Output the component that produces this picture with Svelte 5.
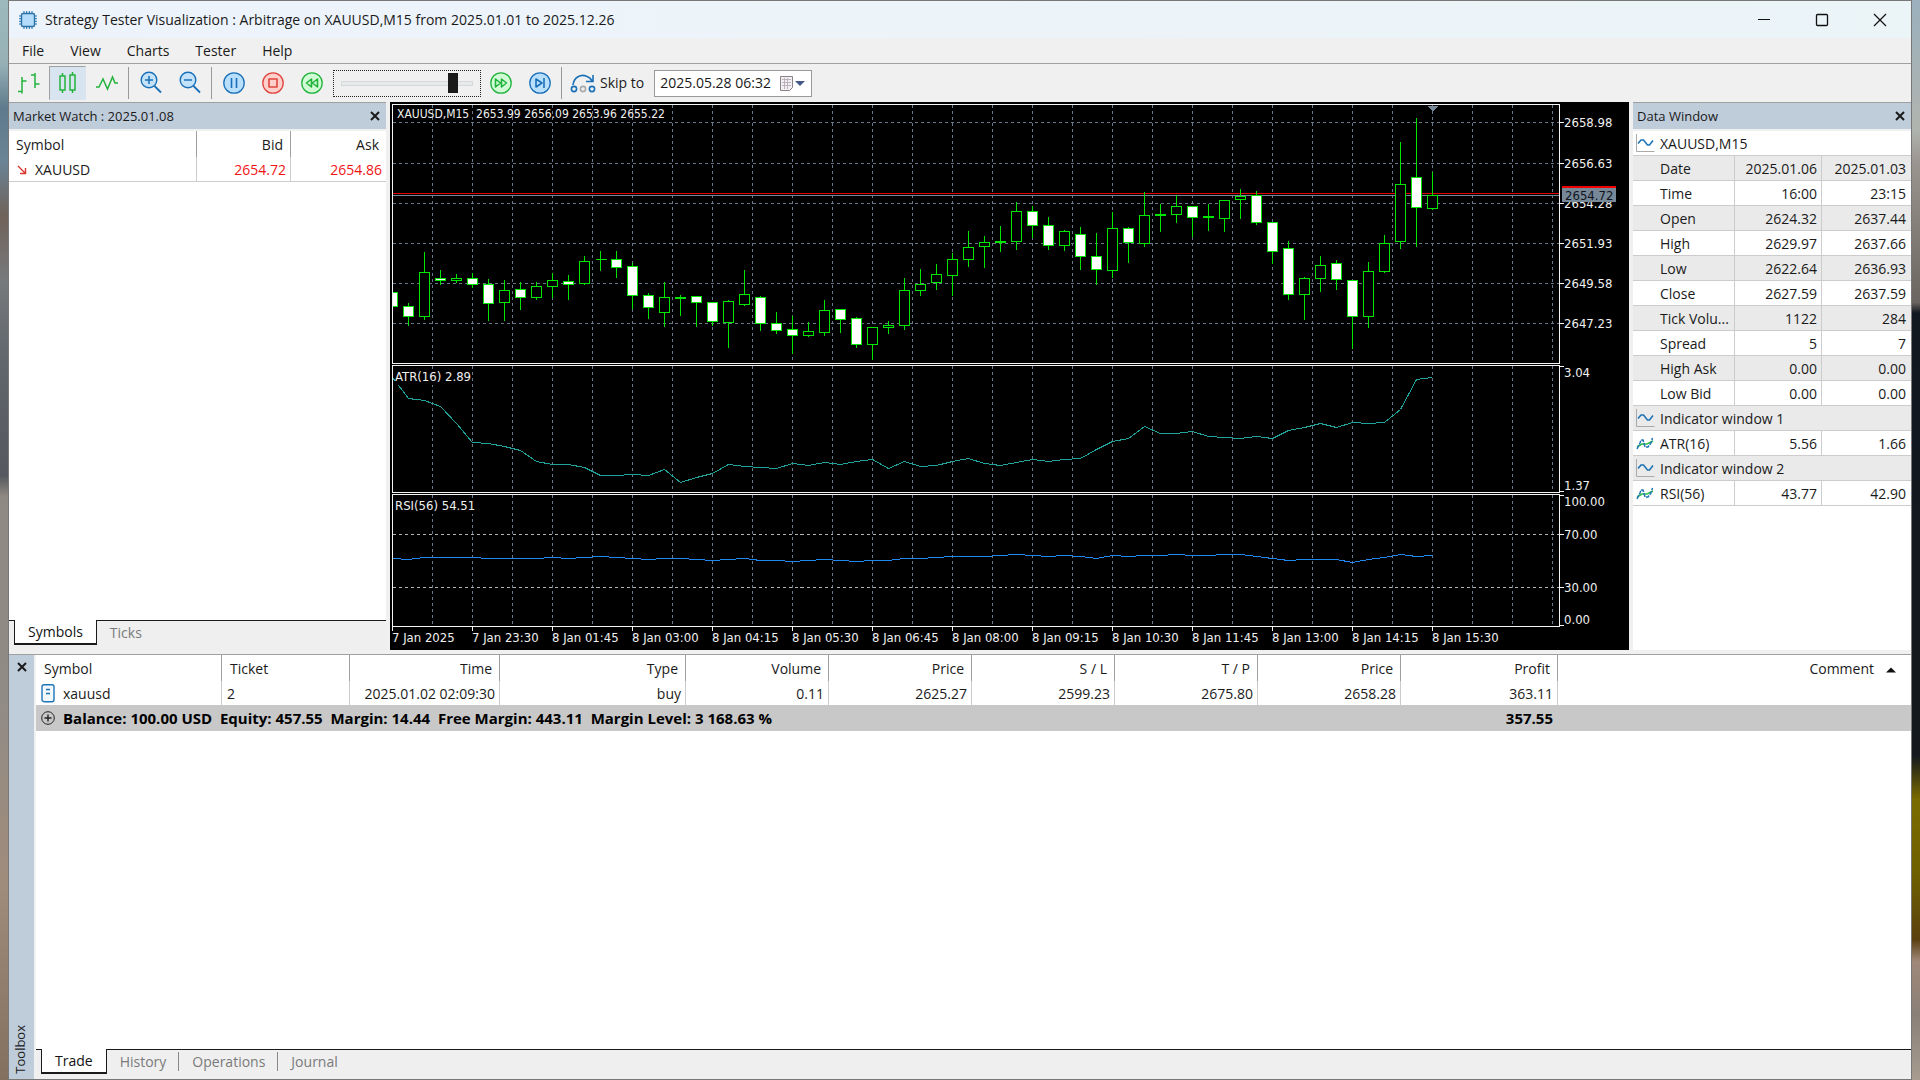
<script>
  const menus = ['File', 'View', 'Charts', 'Tester', 'Help'];

  const tradeHead = ['Symbol', 'Ticket', 'Time', 'Type', 'Volume', 'Price', 'S / L', 'T / P', 'Price', 'Profit'];
  const tradeRow = ['2', '2025.01.02 02:09:30', 'buy', '0.11', '2625.27', '2599.23', '2675.80', '2658.28', '363.11'];

  const dataRows = [
    { kind: 'window', name: 'XAUUSD,M15' },
    { name: 'Date', values: ['2025.01.06', '2025.01.03'] },
    { name: 'Time', values: ['16:00', '23:15'] },
    { name: 'Open', values: ['2624.32', '2637.44'] },
    { name: 'High', values: ['2629.97', '2637.66'] },
    { name: 'Low', values: ['2622.64', '2636.93'] },
    { name: 'Close', values: ['2627.59', '2637.59'] },
    { name: 'Tick Volu...', values: ['1122', '284'] },
    { name: 'Spread', values: ['5', '7'] },
    { name: 'High Ask', values: ['0.00', '0.00'] },
    { name: 'Low Bid', values: ['0.00', '0.00'] },
    { kind: 'window', name: 'Indicator window 1' },
    { kind: 'indicator', name: 'ATR(16)', values: ['5.56', '1.66'] },
    { kind: 'window', name: 'Indicator window 2' },
    { kind: 'indicator', name: 'RSI(56)', values: ['43.77', '42.90'] }
  ];

  let speed = $state(88);
  let skipTo = $state('2025.05.28 06:32');
  let marketTab = $state('Symbols');
  let toolboxTab = $state('Trade');

  // high, body top, body bottom, low in chart units; 1 = bearish (filled)
  const candles = [
    [190, 190, 204, 204, 1], [200, 204, 214, 222, 1], [149, 170, 214, 216, 0], [167, 176, 178, 181, 1],
    [171, 176, 178, 179, 0], [170, 176, 182, 184, 1], [176, 182, 201, 217, 1], [177, 188, 200, 217, 0],
    [179, 187, 195, 206, 1], [179, 184, 195, 196, 0], [170, 178, 184, 194, 0], [172, 179, 182, 196, 1],
    [153, 159, 181, 181, 0], [148, 157, 157, 167, 0], [148, 157, 165, 174, 1], [160, 164, 193, 205, 1],
    [190, 193, 205, 215, 1], [179, 195, 210, 223, 0], [192, 195, 196, 212, 0], [194, 194, 200, 223, 1],
    [199, 200, 219, 222, 1], [197, 199, 220, 244, 0], [167, 192, 202, 202, 0], [193, 195, 221, 227, 1],
    [209, 221, 228, 230, 1], [213, 227, 233, 250, 1], [219, 229, 233, 233, 0], [197, 208, 230, 232, 0],
    [206, 207, 217, 229, 1], [214, 216, 242, 244, 1], [224, 225, 242, 256, 0], [218, 223, 225, 230, 0],
    [175, 188, 223, 226, 0], [166, 182, 188, 192, 0], [161, 172, 180, 186, 0], [150, 157, 173, 192, 0],
    [128, 145, 157, 163, 0], [133, 140, 144, 164, 0], [123, 139, 140, 148, 0], [99, 109, 139, 146, 0],
    [103, 109, 123, 134, 1], [114, 123, 143, 146, 1], [127, 129, 143, 147, 0], [124, 132, 154, 166, 1],
    [130, 154, 167, 181, 1], [109, 126, 168, 174, 0], [124, 126, 140, 159, 1], [89, 113, 141, 143, 0],
    [101, 112, 113, 128, 0], [92, 104, 112, 119, 0], [103, 104, 115, 133, 1], [101, 114, 115, 127, 0],
    [98, 98, 116, 128, 0], [86, 94, 97, 115, 0], [88, 93, 120, 121, 1], [120, 120, 149, 160, 1],
    [138, 146, 192, 196, 1], [174, 176, 192, 216, 0], [153, 163, 176, 188, 0], [157, 161, 177, 186, 1],
    [177, 178, 214, 245, 1], [159, 169, 214, 224, 0], [132, 141, 169, 169, 0], [39, 82, 139, 145, 0],
    [15, 75, 105, 143, 1], [69, 93, 106, 106, 0]
  ];

  const atr = [
    275, 296, 298, 304, 321, 340, 341, 344, 348, 359, 362, 362, 365, 373, 373, 372, 373, 367, 380, 375, 371, 362,
    364, 365, 366, 361, 363, 360, 362, 359, 357, 366, 359, 364, 363, 359, 356, 361, 363, 360, 357, 359, 357, 356,
    347, 339, 336, 324, 331, 331, 329, 334, 335, 336, 334, 336, 328, 325, 321, 325, 320, 321, 320, 307, 277, 275
  ];

  const rsi = [
    456, 457, 455, 455, 455, 455, 456, 456, 456, 456, 455, 456, 455, 454, 455, 456, 457, 456, 456, 457, 458, 457,
    456, 458, 458, 459, 458, 457, 458, 459, 458, 458, 456, 456, 455, 454, 454, 454, 453, 452, 453, 454, 453, 454,
    456, 453, 454, 453, 453, 452, 453, 453, 452, 452, 454, 456, 458, 457, 457, 457, 460, 457, 455, 452, 454, 453
  ];

  const BAR = 16;
  const LEFT = 2;
  const RIGHT = 1169;
  const barX = (i) => LEFT + i * BAR;
  const toPoints = (ys) => ys.map((y, i) => `${barX(i)},${y}`).join(' ');

  const gridX = Array.from({ length: 29 }, (_, i) => 42 + i * 40);
  const priceLevels = [
    [20, '2658.98'], [61, '2656.63'], [101, '2654.28'], [141, '2651.93'], [181, '2649.58'], [221, '2647.23']
  ];
  const panes = [[2, 261], [263, 390], [392, 524]];
  const subLabels = [
    [264, 270, '3.04'], [389, 383, '1.37'], [393, 399, '100.00'], [432, 432, '70.00'], [485, 485, '30.00'], [523, 517, '0.00']
  ];
  const times = [
    '7 Jan 2025', '7 Jan 23:30', '8 Jan 01:45', '8 Jan 03:00', '8 Jan 04:15', '8 Jan 05:30', '8 Jan 06:45',
    '8 Jan 08:00', '8 Jan 09:15', '8 Jan 10:30', '8 Jan 11:45', '8 Jan 13:00', '8 Jan 14:15', '8 Jan 15:30'
  ];
</script>

{#snippet cross()}
  <svg width="12" height="12" viewBox="0 0 12 12"><path d="M2 2l8 8M10 2l-8 8" stroke="#1a1a1a" stroke-width="2" /></svg>
{/snippet}

{#snippet round(color, fill, d)}
  <svg width="24" height="24" viewBox="0 0 24 24" fill="none" stroke={color}>
    <circle cx="12" cy="12" r="10.2" fill={fill} stroke-width="1.3" />
    <path {d} stroke-width="1.6" stroke-linejoin="round" />
  </svg>
{/snippet}

{#snippet zoomIcon(d)}
  <svg width="24" height="24" viewBox="0 0 24 24" fill="none" stroke="#1a70b8">
    <circle cx="10" cy="9" r="7.8" fill="#c4e3fb" stroke-width="1.4" />
    <path d="M15.5 15L22 21.5" stroke-width="1.8" />
    <path {d} stroke-width="1.5" />
  </svg>
{/snippet}

<div class="desktop">
  <main class="window">
    <header class="titlebar">
      <svg width="20" height="20" viewBox="0 0 20 20" fill="none" stroke="#2672a8">
        <path d="M6 1v18M8.700 1v18M11.300 1v18M14 1v18M1 6h18M1 8.700h18M1 11.300h18M1 14h18" />
        <rect x="3.5" y="3.5" width="13" height="13" rx="1.5" fill="#b5dcfa" stroke-width="1.4" />
      </svg>
      <h1>Strategy Tester Visualization : Arbitrage on XAUUSD,M15 from 2025.01.01 to 2025.12.26</h1>
      <div class="caption">
        <button aria-label="Minimize"><svg width="14" height="14" viewBox="0 0 14 14"><path d="M1 6.5h12" stroke="#111" /></svg></button>
        <button aria-label="Maximize"><svg width="14" height="14" viewBox="0 0 14 14"><rect x="1.5" y="1.5" width="11" height="11" rx="1" fill="none" stroke="#111" stroke-width="1.3" /></svg></button>
        <button aria-label="Close"><svg width="14" height="14" viewBox="0 0 14 14"><path d="M1 1l12 12M13 1L1 13" stroke="#111" stroke-width="1.2" /></svg></button>
      </div>
    </header>

    <nav class="menubar">
      {#each menus as menu}
        <button>{menu}</button>
      {/each}
    </nav>

    <div class="toolbar">
      <button class="tool" aria-label="Bars">
        <svg width="24" height="24" viewBox="0 0 24 24" fill="none" stroke="#22b33c" stroke-width="1.5">
          <path d="M5 6v16.500M5 10h4.500M1 20.500h4M18 2v15M14 4h4M18 13h4.500" />
        </svg>
      </button>
      <button class="tool selected" aria-label="Candlesticks">
        <svg width="24" height="24" viewBox="0 0 24 24" fill="none" stroke="#22b33c" stroke-width="1.5">
          <path d="M4 5h5v14h-5zM6.500 2v3M6.500 19v3M14 4h5v15h-5zM16.500 1v3M16.500 19v3" />
        </svg>
      </button>
      <button class="tool" aria-label="Line">
        <svg width="24" height="24" viewBox="0 0 24 24" fill="none" stroke="#22b33c" stroke-width="1.5">
          <path d="M1 16h3l4-8 4.500 10 5-12 2.500 6h3" />
        </svg>
      </button>
      <span class="sep"></span>
      <button class="tool" aria-label="Zoom in">{@render zoomIcon('M10 5v8M6 9h8')}</button>
      <button class="tool" aria-label="Zoom out">{@render zoomIcon('M6 9h8')}</button>
      <span class="sep"></span>
      <button class="tool" aria-label="Pause">{@render round('#1a70b8', '#b8dffc', 'M9.500 7v10M14.500 7v10')}</button>
      <button class="tool" aria-label="Stop">{@render round('#e0443e', '#fdd0cc', 'M8 8h8v8h-8z')}</button>
      <button class="tool" aria-label="Slower">{@render round('#22b33c', '#d0fbd4', 'M11.500 8v8l-5-4zM17.500 8v8l-5-4z')}</button>
      <input class="speed" type="range" min="0" max="100" aria-label="Speed" bind:value={speed} />
      <button class="tool" aria-label="Faster">{@render round('#22b33c', '#d0fbd4', 'M6.500 8v8l5-4zM12.500 8v8l5-4z')}</button>
      <button class="tool" aria-label="Next bar">{@render round('#1a70b8', '#b8dffc', 'M8 8v8l6-4zM16 7v10')}</button>
      <span class="sep"></span>
      <label class="skip" for="skip-to">
        <svg width="26" height="20" viewBox="0 0 26 20" fill="none" stroke="#1a70b8" stroke-width="1.6">
          <path d="M3 12C4 4 11 1 16 3c3 1 5 3 6 5M23 2v6.500h-7" />
          <circle cx="4" cy="16" r="2.600" />
          <circle cx="13" cy="16" r="2.600" stroke="#aaa" />
          <circle cx="22" cy="16" r="2.600" />
        </svg>
        Skip to
      </label>
      <div class="date">
        <input id="skip-to" type="text" bind:value={skipTo} />
        <button aria-label="Open calendar">
          <svg width="26" height="17" viewBox="0 0 26 17">
            <path d="M1.500 1.500h12v11l-3 3h-9z" fill="#f2f0f4" stroke="#8a8285" />
            <path d="M3 4.500h9M3 7.500h9M3 10.500h9M5.500 3v11M8.500 3v11" stroke="#bcb4b8" fill="none" />
            <path d="M16 6h10l-5 5z" fill="#45588a" />
          </svg>
        </button>
      </div>
    </div>

    <div class="workspace">
      <section class="side market">
        <header class="panel-head"><h2>Market Watch : 2025.01.08</h2><button aria-label="Close Market Watch">{@render cross()}</button></header>
        <div class="body">
          <table>
            <colgroup><col /><col class="bid" /><col class="ask" /></colgroup>
            <thead><tr><th>Symbol</th><th>Bid</th><th>Ask</th></tr></thead>
            <tbody>
              <tr>
                <td>
                  <span class="cell">
                    <svg width="10" height="10" viewBox="0 0 10 10"><path d="M1 1l7 7M8.500 3v5.500h-5.500" fill="none" stroke="#d8382f" stroke-width="1.4" /></svg>
                    XAUUSD
                  </span>
                </td>
                <td>2654.72</td>
                <td>2654.86</td>
              </tr>
            </tbody>
          </table>
        </div>
        <div class="tabs">
          {#each ['Symbols', 'Ticks'] as tab}
            <button class:active={marketTab === tab} onclick={() => (marketTab = tab)}>{tab}</button>
          {/each}
        </div>
      </section>

      <section class="chart">
        <svg viewBox="0 0 1239 548" role="img" aria-label="XAUUSD,M15 chart">
          <g transform="translate(0.5 0.5)" shape-rendering="crispEdges" fill="none">
            {#each gridX as x}
              {#each panes as [top, bottom]}
                <line class="grid" x1={x} x2={x} y1={top} y2={bottom} />
              {/each}
            {/each}
            {#each priceLevels as [y]}
              <line class="grid" x1={LEFT} x2={RIGHT} y1={y} y2={y} />
            {/each}
            <path class="level" d="M{LEFT} 432H{RIGHT}M{LEFT} 485H{RIGHT}" />
            <path d="M{LEFT} 91H{RIGHT}" stroke="#e00000" />
            <path d="M{LEFT} 93H{RIGHT}" stroke="#778899" />

            {#each candles as [high, top, bottom, low, bear], i}
              {@const x = barX(i)}
              {@const left = Math.max(x - 5, LEFT)}
              <path class="candle" d="M{x} {high}V{top}M{x} {bottom}V{low + 1}" />
              {#if top === bottom}
                <path class="candle" d="M{left} {top}H{x + 6}" />
              {:else}
                <rect class="candle" class:bear x={left} y={top} width={x + 5 - left} height={bottom - top} />
              {/if}
            {/each}

            <polyline points={toPoints(atr)} stroke="#20a39b" />
            <polyline points={toPoints(rsi)} stroke="#1e87f0" />

            <path class="frame" d="M{LEFT} 2V261H{RIGHT}V2ZM{LEFT} 263V390H{RIGHT}V263ZM{LEFT} 392V524H{RIGHT}V392Z" />
            {#each priceLevels as [y]}
              <path class="frame" d="M{RIGHT} {y}h4" />
            {/each}
            {#each subLabels as [y]}
              <path class="frame" d="M{RIGHT} {y}h4" />
            {/each}
            {#each times as _, i}
              <path class="frame" d="M{LEFT + i * 80} 524v4" />
            {/each}
            <path d="M1036 3h12l-6 6z" fill="#778899" />
          </g>

          <text class="ohlc" x="7" y="16">XAUUSD,M15&nbsp; 2653.99 2656.09 2653.96 2655.22</text>
          <rect x="5" y="267" width="76" height="16" />
          <text x="5" y="279">ATR(16) 2.89</text>
          <rect x="5" y="396" width="78" height="16" />
          <text x="5" y="408">RSI(56) 54.51</text>
          {#each priceLevels as [y, label]}
            <text x="1174" y={y + 5}>{label}</text>
          {/each}
          {#each subLabels as [, y, label]}
            <text x="1174" y={y + 5}>{label}</text>
          {/each}
          {#each times as label, i}
            <text x={LEFT + i * 80} y="540">{label}</text>
          {/each}
          <rect x="1172" y="84" width="54" height="16" fill="#778899" />
          <rect x="1172" y="84" width="54" height="2" fill="#f00000" />
          <text class="last" x="1175" y="98">2654.72</text>
        </svg>
      </section>

      <section class="side data">
        <header class="panel-head"><h2>Data Window</h2><button aria-label="Close Data Window">{@render cross()}</button></header>
        <div class="body">
          <table>
            <colgroup><col class="name" /><col class="first" /><col /></colgroup>
            <tbody>
              {#each dataRows as row}
                <tr>
                  <th colspan={row.values ? 1 : 3} scope="row">
                    <span class="cell">
                      <i>
                        {#if row.kind === 'window'}
                          <svg width="20" height="20" viewBox="0 0 20 20" fill="none">
                            <path d="M1.500 0v17.500h18" stroke="#aaa" />
                            <path d="M3 9.500l3-3.500h2.500l4 5h2l3.500-4.500" stroke="#1f74b5" stroke-width="1.6" />
                          </svg>
                        {:else if row.kind === 'indicator'}
                          <svg width="20" height="20" viewBox="0 0 20 20" fill="none" stroke-width="1.5">
                            <path d="M2 13l5-3h5l6-3" stroke="#2cc04a" />
                            <path d="M2 15l3-6 1-3h2l2 7h3l3-4 1.500-5" stroke="#1f74b5" stroke-dasharray="4 1" />
                          </svg>
                        {/if}
                      </i>
                      {row.name}
                    </span>
                  </th>
                  {#each row.values ?? [] as value}
                    <td>{value}</td>
                  {/each}
                </tr>
              {/each}
            </tbody>
          </table>
        </div>
      </section>
    </div>

    <section class="toolbox">
      <aside>
        <button aria-label="Close Toolbox">{@render cross()}</button>
        <span>Toolbox</span>
      </aside>
      <div class="sheet">
        <div class="body">
          <table class="trades">
            <colgroup>
              <col class="w186" /><col class="w128" /><col class="w150" /><col class="w186" />
              <col class="w143" /><col class="w143" /><col class="w143" /><col class="w143" /><col class="w143" />
              <col class="w157" /><col />
            </colgroup>
            <thead>
              <tr>
                {#each tradeHead as head}
                  <th>{head}</th>
                {/each}
                <th class="comment">Comment<svg width="10" height="6" viewBox="0 0 10 6"><path d="M0 5.500L5 .5l5 5z" fill="#111" /></svg></th>
              </tr>
            </thead>
            <tbody>
              <tr>
                <td>
                  <span class="cell">
                    <svg width="14" height="20" viewBox="0 0 14 20" fill="none" stroke="#1f74b5">
                      <rect x="1" y=".700" width="12" height="17" rx="2" fill="#f2f9ff" stroke-width="1.400" />
                      <path d="M5 5.500h4M5 9.500h4" stroke-width="1.400" />
                    </svg>
                    xauusd
                  </span>
                </td>
                {#each tradeRow as value}
                  <td>{value}</td>
                {/each}
                <td></td>
              </tr>
              <tr class="summary">
                <td colspan="9">
                  <span class="cell">
                    <svg width="14" height="14" viewBox="0 0 14 14" fill="none" stroke="#222">
                      <circle cx="7" cy="7" r="6.300" /><path d="M7 3.500v7M3.500 7h7" stroke-width="1.400" />
                    </svg>
                    Balance: 100.00 USD&nbsp; Equity: 457.55&nbsp; Margin: 14.44&nbsp; Free Margin: 443.11&nbsp; Margin Level: 3 168.63 %
                  </span>
                </td>
                <td>357.55</td>
                <td></td>
              </tr>
            </tbody>
          </table>
        </div>
        <div class="tabs">
          {#each ['Trade', 'History', 'Operations', 'Journal'] as tab}
            <button class:active={toolboxTab === tab} onclick={() => (toolboxTab = tab)}>{tab}</button>
          {/each}
        </div>
      </div>
    </section>
  </main>
</div>

<style>
  :global(body) {
    margin: 0;
    background: #222;
  }

  .desktop {
    box-sizing: border-box;
    min-height: 100vh;
    padding: 0 8px;
    display: flex;
    background:
      linear-gradient(#9db9be 0, #96b0b6 6%, #5f7a8c 10%, #6a8496 15%, #6f6259 20%, #777a7c 26%, #62676d 33%, #55585e 44%, #8f8983 46%, #918b86 65%, #a08c7a 82%, #84705e 100%) left / 8px 100% no-repeat,
      linear-gradient(#9ab0bd 0, #b0b4ae 12%, #9b9590 15%, #6b6560 28%, #101820 29%, #15191d 70%, #7a6b00 74%, #6e6000 81%, #5a4010 87%, #a08878 89%, #8a8078 94%, #a89c90 100%) right / 8px 100% no-repeat;
    font-family: 'Open Sans', 'Noto Sans', sans-serif;
    font-size: 14px;
    line-height: 20px;
    color: #1a1a1a;
  }

  .window {
    flex: 1;
    min-width: 0;
    display: flex;
    flex-direction: column;
    border: 1px solid #777;
    background: #f0f0f0;
  }

  button {
    border: 0;
    padding: 0;
    background: none;
    color: inherit;
    font: inherit;
    display: flex;
    align-items: center;
    justify-content: center;
  }

  h1, h2 {
    margin: 0;
    font-size: 14px;
    font-weight: 400;
  }

  svg {
    flex: none;
    display: block;
  }

  table {
    width: 100%;
    border-collapse: separate;
    border-spacing: 0;
    table-layout: fixed;
  }

  th, td {
    box-sizing: border-box;
    padding: 2px 4px 0;
    font-weight: 400;
    text-align: right;
    white-space: nowrap;
  }

  .cell {
    display: flex;
    align-items: center;
    gap: 8px;
  }

  /* title, menu */
  .titlebar {
    height: 37px;
    display: flex;
    align-items: center;
    gap: 7px;
    padding: 0 2px 0 9px;
    background: linear-gradient(90deg, #edf3fb, #ebf4f7);
  }

  .titlebar h1 {
    flex: 1;
  }

  .caption {
    display: flex;
    align-self: stretch;
  }

  .caption button {
    width: 58px;
  }

  .menubar {
    display: flex;
    height: 25px;
    border-bottom: 1px solid #a0a0a0;
  }

  .menubar button {
    padding: 0 13px;
  }

  /* toolbar */
  .toolbar {
    display: flex;
    align-items: center;
    height: 38px;
  }

  .tool {
    box-sizing: border-box;
    width: 37px;
    height: 34px;
    margin: 0 1px;
    border: 1px solid transparent;
  }

  .tool.selected {
    background: #d8e5f1;
    border-top-color: #a0a0a0;
    border-left-color: #a0a0a0;
  }

  .sep {
    width: 1px;
    height: 32px;
    margin: 0 2px;
    background: #999;
  }

  .speed {
    appearance: none;
    box-sizing: border-box;
    width: 148px;
    height: 27px;
    margin: 0 0 0 2px;
    padding: 0 7px;
    border: 1px dotted #222;
    background: none;
  }

  .speed::-webkit-slider-runnable-track {
    box-sizing: border-box;
    height: 5px;
    border: 1px solid #d6dadb;
    background: #e7eaea;
  }

  .speed::-webkit-slider-thumb {
    appearance: none;
    width: 10px;
    height: 20px;
    margin-top: -9px;
    background: #1a1a1a;
  }

  .skip {
    display: flex;
    align-items: center;
    gap: 4px;
    padding: 0 10px 0 6px;
  }

  .date {
    box-sizing: border-box;
    display: flex;
    width: 158px;
    height: 27px;
    border: 1px solid #999;
    background: #fff;
  }

  .date input {
    flex: 1;
    min-width: 0;
    border: 0;
    padding: 0 0 0 5px;
    background: none;
    color: inherit;
    font: inherit;
  }

  .date button {
    padding-right: 6px;
  }

  /* panels */
  .workspace {
    display: flex;
    gap: 4px;
    padding-bottom: 4px;
  }

  .side {
    flex: none;
    display: flex;
    flex-direction: column;
  }

  .market {
    width: 377px;
  }

  .data {
    width: 278px;
  }

  .panel-head {
    display: flex;
    align-items: center;
    justify-content: space-between;
    height: 26px;
    padding: 0 5px 0 4px;
    border-top: 1px solid #a0a0a0;
    border-bottom: 2px solid #f0f0f0;
    background: #bfccda;
    background-clip: padding-box;
  }

  .panel-head h2 {
    font-size: 13px;
  }

  .body {
    flex: 1;
    background: #fff;
  }

  .market thead th {
    height: 26px;
    padding: 2px 7px 0;
    border-right: 1px solid #a0a0a0;
  }

  .market tbody td {
    height: 25px;
    border-right: 1px solid #ccc;
    border-bottom: 1px solid #ccc;
    color: #f01414;
  }

  .market th:first-child {
    text-align: left;
  }

  .market tbody td:first-child {
    padding-left: 8px;
    color: inherit;
  }

  .market th:last-child,
  .market tbody td:last-child {
    border-right: 0;
  }

  .bid {
    width: 94px;
  }

  .ask {
    width: 95px;
  }

  .data th,
  .data td {
    height: 25px;
    border-bottom: 1px solid #ccc;
  }

  .data th {
    padding: 2px 4px 0 2px;
    text-align: left;
  }

  .data td {
    border-left: 1px solid #ccc;
  }

  .data td:last-child {
    padding-right: 5px;
  }

  .data tr:nth-child(even) {
    background: #eaeaea;
  }

  .data .cell {
    gap: 5px;
  }

  .data i {
    flex: none;
    width: 20px;
  }

  .name {
    width: 101px;
  }

  .first {
    width: 87px;
  }

  .tabs {
    display: flex;
    height: 30px;
    padding-left: 5px;
    background: linear-gradient(#1a1a1a 1px, #efefef 1px);
  }

  .tabs button {
    box-sizing: border-box;
    height: 25px;
    padding: 0 13px;
    color: #7a7a7a;
  }

  .tabs button.active {
    border: solid #1a1a1a;
    border-width: 0 1px 2px;
    background: #fff;
    color: #111;
  }

  /* chart */
  .chart {
    flex: 1;
    min-width: 0;
    background: #000;
  }

  .chart svg {
    width: 100%;
    height: auto;
  }

  .chart text {
    font-family: 'DejaVu Sans Condensed', 'DejaVu Sans', sans-serif;
    font-stretch: condensed;
    font-size: 13px;
    fill: #f0f0f0;
  }

  .chart text.ohlc {
    font-size: 12px;
  }

  .chart text.last {
    fill: #10141a;
  }

  .grid {
    stroke: #66788a;
    stroke-dasharray: 3 3;
  }

  .level {
    stroke: #b4b4b4;
    stroke-dasharray: 3 3;
  }

  .frame {
    stroke: #f4f4f4;
  }

  .candle {
    stroke: #00e600;
    fill: #000;
  }

  .candle.bear {
    fill: #fff;
  }

  /* toolbox */
  .toolbox {
    flex: 1;
    display: flex;
    gap: 2px;
    border-top: 1px solid #a0a0a0;
  }

  .toolbox aside {
    flex: none;
    width: 25px;
    display: flex;
    flex-direction: column;
    align-items: center;
    justify-content: space-between;
    padding: 6px 0 5px;
    background: #bfccda;
  }

  .toolbox aside span {
    writing-mode: vertical-rl;
    transform: rotate(180deg);
    margin-right: 4px;
    font-size: 13px;
  }

  .sheet {
    flex: 1;
    min-width: 0;
    display: flex;
    flex-direction: column;
  }

  .trades th {
    height: 26px;
    padding: 2px 7px 0 8px;
    border-right: 1px solid #a0a0a0;
  }

  .trades td {
    height: 24px;
    padding: 2px 4px 0 5px;
    border-right: 1px solid #ccc;
  }

  .trades th:nth-child(-n + 2),
  .trades td:nth-child(-n + 2) {
    text-align: left;
  }

  .trades .summary td {
    height: 26px;
    padding-top: 0;
    border-right-color: #c8c8c8;
    background: #c8c8c8;
    color: #000;
    font-size: 15px;
    font-weight: 700;
    text-align: right;
  }

  .trades th:last-child,
  .trades td:last-child {
    border-right: 0;
  }

  .trades .comment {
    padding-right: 15px;
  }

  .comment svg {
    display: inline-block;
    margin-left: 12px;
    vertical-align: middle;
  }

  .toolbox .tabs button + button:not(.active) {
    background: linear-gradient(#888, #888) right / 1px 19px no-repeat;
  }

  .toolbox .tabs button:last-child:not(.active) {
    background: none;
  }

  .w128 {
    width: 128px;
  }

  .w143 {
    width: 143px;
  }

  .w150 {
    width: 150px;
  }

  .w157 {
    width: 157px;
  }

  .w186 {
    width: 186px;
  }
</style>
